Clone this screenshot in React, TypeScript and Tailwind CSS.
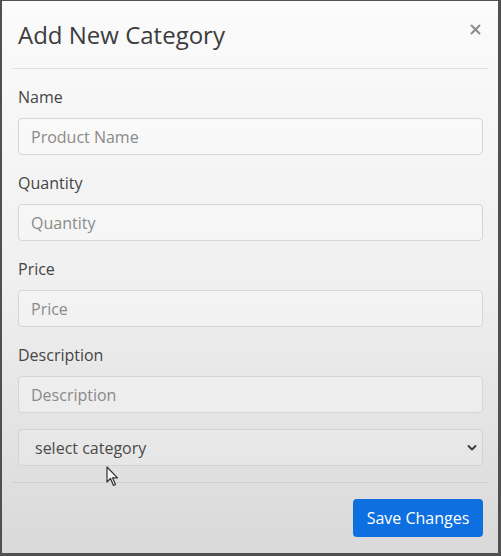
import React from "react";

function Field({ label, placeholder }: { label: string; placeholder: string }) {
  return (
    <div className="mb-[16px] flex flex-col">
      <label className="mb-[9px] text-[16px] leading-[24px] text-[#454545]">{label}</label>
      <div className="flex h-[37px] items-center rounded-[4px] border border-[#d6d6d8] bg-white/30 px-[12px] text-[16px] text-[#8a8a8a]">
        {placeholder}
      </div>
    </div>
  );
}

export default function App() {
  return (
    <div
      className="relative h-[556px] w-[501px] overflow-hidden border-b-[3px] border-l-[2px] border-r-[3px] border-t-[1px] border-[#505050] bg-gradient-to-b from-[#fbfbfc] via-[#f0f0f1] to-[#d9d9d9]"
      style={{ fontFamily: '"Open Sans", "Liberation Sans", sans-serif' }}
    >
      <div className="flex h-[67px] items-center justify-between pl-[16px] pr-[17px]">
        <h1 className="mt-[1px] text-[24px] leading-[32px] text-[#3c3c3c]">Add New Category</h1>
        <svg width="11" height="11" viewBox="0 0 11 11" className="mb-[10px]">
          <path d="M1.5 1.5 L9.5 9.5 M9.5 1.5 L1.5 9.5" stroke="#8a8a8a" strokeWidth="2" strokeLinecap="round" />
        </svg>
      </div>
      <div className="mx-[10px] h-px bg-[#e2e2e4]" />
      <div className="pl-[16px] pr-[15px] pt-[16px]">
        <Field label="Name" placeholder="Product Name" />
        <Field label="Quantity" placeholder="Quantity" />
        <Field label="Price" placeholder="Price" />
        <Field label="Description" placeholder="Description" />
        <div className="mt-[1px] flex h-[37px] items-center justify-between rounded-[4px] border border-[#d2d2d2] bg-white/20 pl-[16px] pr-[5px] text-[16px] text-[#4a4a4a]">
          <span>select category</span>
          <svg width="10" height="8" viewBox="0 0 10 8">
            <path d="M1.5 2 L5 5.5 L8.5 2" stroke="#3f3f3f" strokeWidth="2" fill="none" strokeLinecap="round" strokeLinejoin="round" />
          </svg>
        </div>
      </div>
      <div className="mx-[10px] mt-[16px] h-px bg-[#d0d0d0]" />
      <div className="flex justify-end px-[15px] pt-[16px]">
        <button className="h-[38px] w-[130px] rounded-[4px] bg-[#0d6fe0] text-[16px] text-white">Save Changes</button>
      </div>
      <svg className="absolute left-[104px] top-[465px]" width="14" height="21" viewBox="0 0 14 21">
        <path d="M1 1 L1 16 L4.5 12.5 L7.5 19.5 L9.5 18.5 L6.5 11.8 L11.5 11.8 Z" fill="#f4f4f4" stroke="#333" strokeWidth="1.2" strokeLinejoin="round" />
      </svg>
    </div>
  );
}
